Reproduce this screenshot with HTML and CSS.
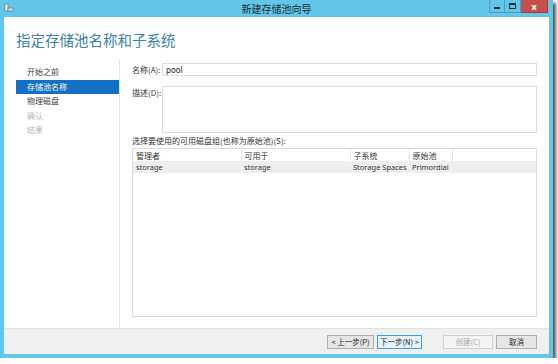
FILE: index.html
```html
<!DOCTYPE html>
<html>
<head>
	<meta charset="utf-8">
	<title>新建存储池向导</title>
	<link rel="stylesheet" href="styles.css">
</head>
<body>

<div class="window">
	<div class="titlebar">
		<svg class="app-icon" width="10" height="10" viewBox="0 0 10 10">
			<rect x="1" y="1" width="3" height="7" fill="#f4f4f4" stroke="#6a7f8c" stroke-width="0.8"/>
			<rect x="4" y="5" width="5" height="3" fill="#d9e4ea" stroke="#6a7f8c" stroke-width="0.8"/>
		</svg>
		<span class="title">新建存储池向导</span>
		<div class="controls">
			<span class="ctl min"><i></i></span>
			<span class="ctl max"><i></i></span>
			<span class="ctl close">x</span>
		</div>
	</div>

	<div class="client">
		<div class="header">
			<h1>指定存储池名称和子系统</h1>
		</div>

		<div class="main">
			<ul class="nav">
				<li>开始之前</li>
				<li class="active">存储池名称</li>
				<li>物理磁盘</li>
				<li class="off">确认</li>
				<li class="off">结果</li>
			</ul>

			<div class="content">
				<div class="field">
					<label for="name">名称(A):</label>
					<input type="text" id="name" value="pool">
				</div>
				<div class="field desc">
					<label for="desc">描述(D):</label>
					<textarea id="desc"></textarea>
				</div>

				<div class="list-label">选择要使用的可用磁盘组(也称为原始池)(S):</div>
				<div class="list">
					<table>
						<tr class="head">
							<th class="c1">管理者</th>
							<th class="c2">可用于</th>
							<th class="c3">子系统</th>
							<th class="c4">原始池</th>
							<th></th>
						</tr>
						<tr class="row">
							<td>storage</td>
							<td>storage</td>
							<td>Storage Spaces</td>
							<td>Primordial</td>
							<td></td>
						</tr>
					</table>
				</div>
			</div>
		</div>

		<div class="footer">
			<button class="prev">&lt; 上一步(P)</button>
			<button class="next">下一步(N) &gt;</button>
			<button class="create" disabled>创建(C)</button>
			<button class="cancel">取消</button>
		</div>
	</div>
</div>

</body>
</html>
```

FILE: styles.css
```css
* {
	box-sizing: border-box;
	margin: 0;
	padding: 0;
}
body {
	background: #fff;
	font-family: "Noto Sans CJK SC", sans-serif;
	font-size: 8px;
	color: #222;
}
.window {
	width: 553px;
	height: 358px;
	background: #62c6e9;
	padding: 0 4px 4px 4px;
	display: flex;
	flex-direction: column;
	box-shadow: 3px 3px 3px rgba(0, 0, 0, 0.65);
}
.titlebar {
	height: 17px;
	display: flex;
	align-items: center;
}
.app-icon {
	margin-top: -2px;
}
.title {
	flex: 1;
	text-align: center;
	font-size: 10px;
	color: #1e2a30;
	padding-left: 50px;
}
.controls {
	display: flex;
	align-self: flex-start;
	margin-right: 1px;
}
.ctl {
	width: 16px;
	height: 13px;
	border: 1px solid #4a9dbf;
	border-top: none;
	background: #62c6e9;
	display: flex;
	align-items: center;
	justify-content: center;
}
.ctl + .ctl {
	border-left: none;
}
.min i {
	width: 6px;
	height: 2px;
	background: #1a2a33;
	margin-top: 3px;
}
.max i {
	width: 7px;
	height: 6px;
	border: 1px solid #1a2a33;
	border-top-width: 2px;
}
.close {
	width: 27px;
	background: #c7514a;
	border-color: #a23d37;
	color: #fff;
	font-family: "Noto Sans", sans-serif;
	font-weight: bold;
	font-size: 9px;
	line-height: 1;
}
.client {
	flex: 1;
	background: #fff;
	display: flex;
	flex-direction: column;
}
.header {
	height: 41px;
	padding: 14px 0 0 12px;
}
h1 {
	font-size: 14.5px;
	font-weight: normal;
	color: #3d7fa6;
	line-height: 18px;
}
.main {
	flex: 1;
	display: flex;
}
.nav {
	width: 116px;
	list-style: none;
	padding: 7px 0 0 12px;
	border-right: 1px solid #e6e6e6;
}
.nav li {
	height: 14.5px;
	line-height: 14.5px;
	padding-left: 11px;
	color: #444;
	white-space: nowrap;
}
.nav li.active {
	background: #1470c4;
	color: #fff;
}
.nav li.off {
	color: #b8b8b8;
}
.content {
	flex: 1;
	padding: 5px 12px 11px 12px;
	display: flex;
	flex-direction: column;
}
.field {
	display: flex;
	align-items: center;
}
.field label {
	width: 30px;
	white-space: nowrap;
	color: #333;
}
input,
textarea {
	flex: 1;
	border: 1px solid #dcdcdc;
	font-family: "Noto Sans", sans-serif;
	font-size: 8px;
	color: #222;
	outline: none;
	resize: none;
}
input {
	height: 13px;
	padding: 0 3px;
	line-height: 11px;
}
.desc {
	align-items: flex-start;
	margin-top: 10px;
}
.desc label {
	margin-top: 1px;
}
textarea {
	height: 47px;
}
.list-label {
	margin-top: 2px;
	height: 12px;
	line-height: 12px;
	white-space: nowrap;
	color: #333;
}
.list {
	flex: 1;
	margin-top: 1px;
	border: 1px solid #dcdcdc;
}
table {
	border-collapse: collapse;
	width: 100%;
	table-layout: fixed;
}
th {
	font-weight: normal;
	text-align: left;
	height: 12px;
	padding: 0 0 0 3px;
	border-right: 1px solid #e2e2e2;
	color: #333;
}
th:last-child {
	border-right: none;
}
.c1 { width: 108px; }
.c2 { width: 109px; }
.c3 { width: 59px; }
.c4 { width: 43px; }
.row {
	background: #eeeeee;
}
td {
	height: 12px;
	padding: 0 0 0 3px;
	font-family: "Noto Sans", sans-serif;
	font-size: 7.5px;
	white-space: nowrap;
	overflow: hidden;
	color: #333;
}
.footer {
	height: 26px;
	background: #f0f0f0;
	border-top: 1px solid #e2e2e2;
	display: flex;
	align-items: center;
	padding: 0 12px 0 0;
	justify-content: flex-end;
}
button {
	height: 14px;
	border: 1px solid #adadad;
	background: #e6e6e6;
	font-family: "Noto Sans CJK SC", sans-serif;
	font-size: 7.5px;
	color: #222;
	line-height: 12px;
	margin-left: 3px;
}
.prev { width: 47px; }
.next {
	width: 45px;
	border-color: #3c9ee0;
	background: #e5f1fb;
}
.create {
	width: 50px;
	margin-left: 21px;
	border-color: #cfcfcf;
	background: #f4f4f4;
	color: #a8a8a8;
}
.cancel { width: 41px; }
```
